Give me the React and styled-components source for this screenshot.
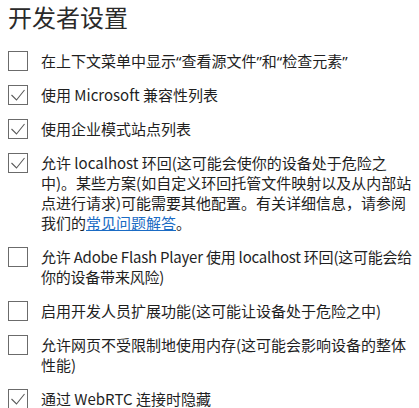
import React from "react";
import styled, { createGlobalStyle } from "styled-components";

const Global = createGlobalStyle`
  html, body { margin: 0; padding: 0; background: #ffffff; }
  body { font-family: "Noto Sans CJK SC", "Noto Sans", sans-serif; color: #1f1f1f; }
`;

const Page = styled.div`
  width: 419px;
  height: 408px;
  overflow: hidden;
  padding: 0 0 0 8px;
  box-sizing: border-box;
`;

const Title = styled.h1`
  margin: 0;
  font-size: 24px;
  line-height: 34px;
  font-weight: 400;
  color: #2a2a2a;
`;

const List = styled.div`
  display: flex;
  flex-direction: column;
  gap: 14px;
  padding-top: 17px;
`;

const Row = styled.label`
  display: flex;
  align-items: flex-start;
  gap: 13px;
`;

const Box = styled.span`
  flex: 0 0 auto;
  width: 20px;
  height: 20px;
  box-sizing: border-box;
  border: 1px solid #6b6b6b;
  display: flex;
  align-items: center;
  justify-content: center;
  svg { display: block; }
`;

const Text = styled.span`
  flex: 1 1 auto;
  display: flex;
  flex-direction: column;
  font-size: 15px;
  line-height: 20px;
  color: #1f1f1f;
  text-autospace: no-autospace;
  letter-spacing: ${(p) => (p.$tight ? "-0.22px" : "0")};
`;

const Line = styled.span`
  white-space: nowrap;
`;

const Quote = styled.span`
  font-family: "Noto Sans", sans-serif;
`;

const Link = styled.a`
  color: #1a6bc4;
  text-decoration: underline;
`;

const Check = ({ checked }) => (
  <Box>
    {checked && (
      <svg width="18" height="18" viewBox="0 0 18 18">
        <polyline
          points="2.5,9 7.5,14 15.5,4"
          fill="none"
          stroke="#5a5a5a"
          strokeWidth="1.1"
        />
      </svg>
    )}
  </Box>
);

const items = [
  {
    checked: false,
    lines: [
      <>
        在上下文菜单中显示<Quote>“</Quote>查看源文件<Quote>”</Quote>和<Quote>“</Quote>检查元素<Quote>”</Quote>
      </>,
    ],
  },
  { checked: true, lines: ["使用 Microsoft 兼容性列表"] },
  { checked: true, lines: ["使用企业模式站点列表"] },
  {
    checked: true,
    lines: [
      "允许 localhost 环回(这可能会使你的设备处于危险之",
      "中)。某些方案(如自定义环回托管文件映射以及从内部站",
      "点进行请求)可能需要其他配置。有关详细信息，请参阅",
      <>
        我们的<Link href="#">常见问题解答</Link>。
      </>,
    ],
  },
  {
    checked: false,
    tight: true,
    lines: ["允许 Adobe Flash Player 使用 localhost 环回(这可能会给", "你的设备带来风险)"],
  },
  { checked: false, lines: ["启用开发人员扩展功能(这可能让设备处于危险之中)"] },
  { checked: false, lines: ["允许网页不受限制地使用内存(这可能会影响设备的整体", "性能)"] },
  { checked: true, lines: ["通过 WebRTC 连接时隐藏"] },
];

export default function App() {
  return (
    <Page>
      <Global />
      <Title>开发者设置</Title>
      <List>
        {items.map((it, i) => (
          <Row key={i}>
            <Check checked={it.checked} />
            <Text $tight={it.tight}>
              {it.lines.map((l, j) => (
                <Line key={j}>{l}</Line>
              ))}
            </Text>
          </Row>
        ))}
      </List>
    </Page>
  );
}
